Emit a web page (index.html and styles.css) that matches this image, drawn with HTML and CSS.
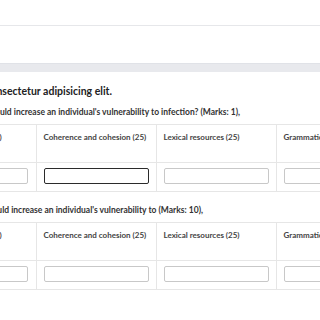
FILE: index.html
```html
<!DOCTYPE html>
<html lang="en">
<head>
    <meta charset="UTF-8">
    <meta name="viewport" content="width=device-width, initial-scale=1.0">
    <title>Marking Sheet</title>
    <link rel="stylesheet" href="styles.css">
</head>
<body>
    <header class="topbar"></header>
    <div class="toolbar"></div>

    <main class="panel">
        <h2 class="title">Lorem ipsum dolor sit amet, consectetur adipisicing elit.</h2>

        <section class="question">
            <p class="question-text q-first">1. Which of the following conditions would increase an individual's vulnerability to infection? (Marks: 1),</p>
            <table class="marks">
                <thead>
                    <tr>
                        <th>Task achievement (25)</th>
                        <th>Coherence and cohesion (25)</th>
                        <th>Lexical resources (25)</th>
                        <th>Grammatical range (25)</th>
                    </tr>
                </thead>
                <tbody>
                    <tr>
                        <td><input type="text" class="mark-input"></td>
                        <td><input type="text" class="mark-input is-active"></td>
                        <td><input type="text" class="mark-input"></td>
                        <td><input type="text" class="mark-input"></td>
                    </tr>
                </tbody>
            </table>
        </section>

        <section class="question">
            <p class="question-text q-second">2. Which of the following conditions would increase an individual's vulnerability to (Marks: 10),</p>
            <table class="marks">
                <thead>
                    <tr>
                        <th>Task achievement (25)</th>
                        <th>Coherence and cohesion (25)</th>
                        <th>Lexical resources (25)</th>
                        <th>Grammatical range (25)</th>
                    </tr>
                </thead>
                <tbody>
                    <tr>
                        <td><input type="text" class="mark-input"></td>
                        <td><input type="text" class="mark-input"></td>
                        <td><input type="text" class="mark-input"></td>
                        <td><input type="text" class="mark-input"></td>
                    </tr>
                </tbody>
            </table>
        </section>
    </main>
</body>
</html>
```

FILE: styles.css
```css
body {
    font-family: Lato, "Noto Sans", sans-serif;
    background-color: #e8e9ed;
    margin: 0;
    padding: 0;
    overflow: hidden;
    width: 320px;
    height: 320px;
}
.topbar {
    height: 25px;
    background: white;
    border-bottom: 1px solid #e6e7ea;
}
.toolbar {
    height: 37px;
    background: white;
    border-bottom: 1px solid #e0e2e7;
}
.panel {
    margin-top: 8px;
    background: white;
    height: 241px;
    padding-top: 12px;
    white-space: nowrap;
}
/* texts are cut at the left edge, so they are laid from their right end */
.title, .question-text {
    display: flex;
    justify-content: flex-end;
}
.title {
    width: 112px;
    margin: 0;
    font-size: 10.5px;
    font-weight: 700;
    color: #222;
    line-height: 14px;
}
.question {
    margin-top: 8px;
}
.question + .question {
    margin-top: 12px;
}
.question-text {
    margin: 0;
    font-size: 8.5px;
    font-weight: 700;
    color: #333;
    line-height: 12px;
}
.q-first {
    width: 240px;
}
.q-second {
    width: 203px;
}
.marks {
    border-collapse: collapse;
    margin-top: 6px;
    margin-left: -84px;
    table-layout: fixed;
    width: 480px;
}
.marks th, .marks td {
    box-sizing: border-box;
    width: 120px;
    border-left: 1px solid #e6e6e6;
    border-top: 1px solid #e6e6e6;
    border-bottom: 1px solid #e6e6e6;
    text-align: left;
}
.marks th:first-child, .marks td:first-child {
    border-left: none;
}
.marks th {
    height: 38px;
    vertical-align: top;
    padding: 7px 7px 0;
    font-size: 8px;
    font-weight: 700;
    color: #444;
    overflow: hidden;
}
.marks td {
    height: 29px;
    vertical-align: top;
    padding: 5px 7px 0;
}
.mark-input {
    display: block;
    box-sizing: border-box;
    width: 105px;
    height: 16px;
    border: 1px solid #c8c8c8;
    border-radius: 2px;
    padding: 0 4px;
    background: white;
}
.mark-input.is-active {
    border: 1px solid #2b2b2b;
}
```
